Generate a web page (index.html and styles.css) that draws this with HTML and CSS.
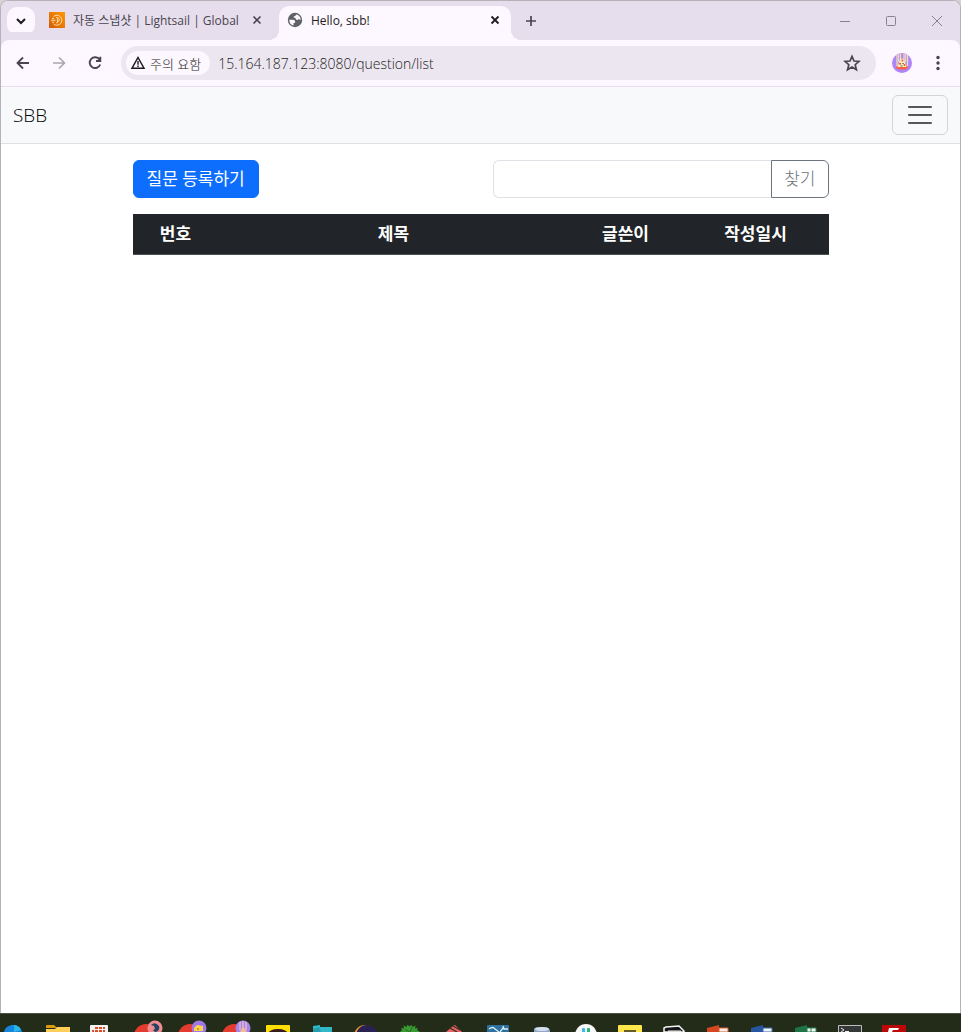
FILE: index.html
```
<!DOCTYPE html>
<html lang="ko">
<head>
  <meta charset="UTF-8">
  <meta name="viewport" content="width=device-width, initial-scale=1.0">
  <title>Hello, sbb!</title>
  <link rel="stylesheet" href="styles.css">
</head>
<body>
  <div class="window">
    <!-- 탭 -->
    <div class="tab-strip">
      <button class="tab-search" aria-label="탭 검색">
        <svg width="28" height="28" viewBox="0 0 28 28"><path d="M10 12l4 4 4-4" fill="none" stroke="#1d1b20" stroke-width="2"/></svg>
      </button>
      <div class="tab">
        <svg width="16" height="16" viewBox="0 0 16 16">
          <defs><linearGradient id="aws" x1="0" y1="1" x2="1" y2="0"><stop offset="0" stop-color="#d45b07"/><stop offset="1" stop-color="#ff9900"/></linearGradient></defs>
          <rect width="16" height="16" fill="url(#aws)"/>
          <g fill="none" stroke="#ffe3bd" stroke-width="0.900"><path d="M4.500 4.500A5 5 0 1 1 4.500 12M2 8.300h4.500M3 6.500h2M3 10.200h2"/><path d="M7 5.500q4 0 3 3-1 2.500-3 2.500M8.500 6.500v3.500"/></g>
        </svg>
        <span class="tab-title">자동 스냅샷 | Lightsail | Global</span>
        <button class="tab-close" aria-label="닫기"><svg width="16" height="16" viewBox="0 0 16 16"><path d="M4.500 4.500l7 7M11.500 4.500l-7 7" stroke="#49454f" stroke-width="1.600"/></svg></button>
      </div>
      <div class="tab active">
        <svg width="16" height="16" viewBox="0 0 16 16">
          <circle cx="8" cy="8" r="7.200" fill="#5f6368"/>
          <path d="M2.300 7.700h3.600c1.700 0 2.400 1.100 2.300 2.200-.1.900-.8 1.100-1.700 1.100v2.600C3.700 12.900 2.100 10.600 2.300 7.700zM9 2.400c0 1.100-.8 1.900-2.200 1.900v1.500h1.500c.5 2.200 1.600 2.600 2.800 1.800.8-.5 1.500-.2 2.600.3.200-2.600-1.600-5.200-4.700-5.500z" fill="#fdf7ff"/>
        </svg>
        <span class="tab-title">Hello, sbb!</span>
        <button class="tab-close" aria-label="닫기"><svg width="16" height="16" viewBox="0 0 16 16"><path d="M4.500 4.500l7 7M11.500 4.500l-7 7" stroke="#1d1b20" stroke-width="1.800"/></svg></button>
      </div>
      <button class="new-tab" aria-label="새 탭"><svg width="16" height="16" viewBox="0 0 16 16"><path d="M8 3v10M3 8h10" stroke="#49454f" stroke-width="1.700"/></svg></button>
      <div class="window-controls">
        <button aria-label="최소화"><svg width="12" height="12" viewBox="0 0 12 12"><path d="M1 6.500h10"/></svg></button>
        <button aria-label="최대화"><svg width="12" height="12" viewBox="0 0 12 12"><rect x="1.500" y="1.500" width="9" height="9" rx="1"/></svg></button>
        <button aria-label="창 닫기"><svg width="12" height="12" viewBox="0 0 12 12"><path d="M1 1l10 10M11 1L1 11"/></svg></button>
      </div>
    </div>

    <!-- 주소창 -->
    <div class="toolbar">
      <div class="nav-buttons">
        <button aria-label="뒤로"><svg width="16" height="16" viewBox="0 0 16 16" fill="none" stroke="#49454f" stroke-width="1.800"><path d="M14 8H3M8 2.500L2.500 8 8 13.500"/></svg></button>
        <button aria-label="앞으로"><svg width="16" height="16" viewBox="0 0 16 16" fill="none" stroke="#aaa5ae" stroke-width="1.600"><path d="M2 8h11M8 2.500L13.500 8 8 13.500"/></svg></button>
        <button aria-label="새로고침"><svg width="16" height="16" viewBox="0 0 16 16" fill="none" stroke="#49454f" stroke-width="1.900"><path d="M12.600 4.600A5.400 5.400 0 1 0 13.200 9.500M13.300 1.800V6H9"/></svg></button>
      </div>
      <div class="omnibox">
        <button class="site-chip">
          <svg width="16" height="16" viewBox="0 0 16 16"><path d="M8 2.500L14 13.200H2z" fill="none" stroke="#1d1b20" stroke-width="1.500"/><path d="M8 6v3.800M8 10.500v1.400" stroke="#1d1b20" stroke-width="1.400"/></svg>
          주의 요함
        </button>
        <input class="url" type="text" aria-label="주소" value="15.164.187.123:8080/question/list">
        <button class="bookmark" aria-label="북마크"><svg width="18" height="18" viewBox="0 0 18 18"><path d="M9 2.300l2 4.700 5 .4-3.800 3.300 1.200 5L9 13l-4.400 2.700 1.200-5L2 7.400 7 7z" fill="none" stroke="#49454f" stroke-width="1.700"/></svg></button>
      </div>
      <button class="profile" aria-label="프로필">
        <svg width="20" height="20" viewBox="0 0 20 20">
          <circle cx="10" cy="10" r="10" fill="#ad84fb"/>
          <path d="M5 1.500V13M8.500 .5V8M12 .5V8M15.500 1.800V13" stroke="#f6df9b" stroke-width="1.300"/>
          <path d="M6.700 1v8M13.700 1v8" stroke="#e9dff1" stroke-width="1"/>
          <ellipse cx="10" cy="14.500" rx="6" ry="2" fill="#ff6240"/>
          <path d="M5.500 14L7 9.500 8 6.500l2-1 2 1 1.200 3L14.500 14z" fill="#fff0bd"/>
          <g fill="#ed4b32"><circle cx="10.400" cy="7.400" r="1"/><circle cx="8" cy="10.800" r="1"/><circle cx="12.500" cy="12" r="1"/></g>
          <path d="M10.300 10.500h1.500M8.500 13h2" stroke="#71564d"/>
        </svg>
      </button>
      <button class="more" aria-label="메뉴"><svg width="16" height="16" viewBox="0 0 16 16" fill="#49454f"><circle cx="8" cy="2.500" r="1.700"/><circle cx="8" cy="8" r="1.700"/><circle cx="8" cy="13.500" r="1.700"/></svg></button>
    </div>

    <!-- 페이지 -->
    <nav class="navbar">
      <a class="navbar-brand" href="#">SBB</a>
      <button class="navbar-toggler" aria-label="Toggle navigation">
        <svg width="30" height="30" viewBox="0 0 30 30"><path d="M4 7h22M4 15h22M4 23h22" stroke="#55575b" stroke-width="2" stroke-linecap="round"/></svg>
      </button>
    </nav>
    <main class="container">
      <div class="row">
        <div class="col"><a class="btn btn-primary" href="#">질문 등록하기</a></div>
        <form class="col input-group">
          <input class="form-control" type="text" aria-label="검색어">
          <button class="btn btn-outline" type="button">찾기</button>
        </form>
      </div>
      <table class="table">
        <colgroup>
          <col class="col-no">
          <col>
          <col class="col-author">
          <col class="col-date">
        </colgroup>
        <thead>
          <tr>
            <th>번호</th>
            <th>제목</th>
            <th>글쓴이</th>
            <th>작성일시</th>
          </tr>
        </thead>
        <tbody></tbody>
      </table>
    </main>
  </div>

  <!-- 작업 표시줄 -->
  <footer class="taskbar">
    <svg viewBox="0 0 28 18"><path d="M4 18c1-5 5-7 9-7 5 0 8 3 9 7z" fill="#1686dc"/><path d="M13 11c4 0 7 2 8 5l-7 2c-1-3 2-4-1-7z" fill="#28b9e9"/></svg>
    <svg viewBox="0 0 28 18"><path d="M2 12q0-1 1-1h7l3 3H2z" fill="#d79a10"/><path d="M2 15h9l2-2h13v5H2z" fill="#ffcf57"/></svg>
    <svg viewBox="0 0 28 18"><rect x="2" y="11" width="18" height="9" rx="1" fill="#f3f3f3"/><path d="M7 13h3v2H7zM11 13h3v2h-3zM15 13h2v2h-2zM4 16h2v2H4zM7 16h3v2H7zM11 16h3v2h-3zM15 16h2v2h-2z" fill="#d94c22"/></svg>
    <svg viewBox="0 0 28 18"><circle cx="14" cy="22" r="12" fill="#e43b2f"/><circle cx="23" cy="14" r="7.500" fill="#ef8d92"/><path d="M19 11q4-4 8 1c1 3-1 6-4 6l-2-2 2-1-1-3z" fill="#244462"/></svg>
    <svg viewBox="0 0 28 18"><circle cx="14" cy="22" r="12" fill="#e43b2f"/><circle cx="23" cy="14" r="7.500" fill="#a078e3"/><path d="M18 14l3-3 6 1v5h-9z" fill="#ffd44a"/><circle cx="22" cy="15" r="1" fill="#b78620"/></svg>
    <svg viewBox="0 0 28 18"><circle cx="14" cy="22" r="12" fill="#e43b2f"/><circle cx="23" cy="14" r="7.500" fill="#a982ed"/><path d="M20 8v8M23 7v8M26 8v8" stroke="#f1d9b1"/><path d="M20 18l3-6 4 6z" fill="#f3b99c"/></svg>
    <svg viewBox="0 0 28 18"><rect x="2" y="11" width="24" height="10" rx="1" fill="#ffe000"/><ellipse cx="14" cy="20" rx="10" ry="5" fill="#351c1b"/></svg>
    <svg viewBox="0 0 28 18"><path d="M5 12l7-1v2h12v5H5z" fill="#2fb9c9"/><path d="M5 15l6-2 2 5H5z" fill="#269eaf"/></svg>
    <svg viewBox="0 0 28 18"><circle cx="13" cy="22" r="11" fill="#ed9330"/><circle cx="15" cy="22" r="11" fill="#292151"/></svg>
    <svg viewBox="0 0 28 18"><path d="M4 18l2-2-1-2 3 .5-.5-3 3 1.500 1-2.200 2 1.700 2-1.700 1 2.200 3-1.500-.5 3 3-.5-1 2 3 2z" fill="#399c32"/><path d="M9 15l4 3M16 13l-2 5" stroke="#226e20"/></svg>
    <svg viewBox="0 0 28 18"><path d="M6 18l7-6 2-1 7 7z" fill="#e96366"/><path d="M10 14l7 4M13 12l7 4" stroke="#392c24" stroke-width="1.200"/></svg>
    <svg viewBox="0 0 28 18"><rect x="3" y="11" width="22" height="9" rx="1" fill="#2e719e"/><path d="M5 15q4-3 6 0l4 3M19 12l1 3h4M19 14l-3 4" fill="none" stroke="#d6eef8" stroke-width="1.300"/></svg>
    <svg viewBox="0 0 28 18"><path d="M6 15q0-2 8-2 8 0 8 4v1H6z" fill="#91a8c7"/><ellipse cx="14" cy="15" rx="7" ry="2" fill="#d3deec"/></svg>
    <svg viewBox="0 0 28 18"><circle cx="14" cy="21" r="11" fill="#f8f8f8"/><rect x="10" y="14" width="3" height="6" rx="1" fill="#38bded"/><rect x="15" y="14" width="3" height="6" rx="1" fill="#2cb47c"/></svg>
    <svg viewBox="0 0 28 18"><rect x="2" y="11" width="24" height="9" rx="1" fill="#ffe74b"/><path d="M8 17h12" stroke="#665d24" stroke-width="2"/></svg>
    <svg viewBox="0 0 28 18"><path d="M4 18v-4l2-1 13-1 5 5v1z" fill="#151515" stroke="#f4f4f4" stroke-width="1.500"/><path d="M8 17h13" stroke="#fff"/></svg>
    <svg viewBox="0 0 28 18"><path d="M3 14l12-3v7H3z" fill="#d64620"/><path d="M15 14h9v4h-9z" fill="#f5eee9" stroke="#dc5a35"/></svg>
    <svg viewBox="0 0 28 18"><path d="M3 14l12-3v7H3z" fill="#2855a0"/><path d="M15 14h9v4h-9z" fill="#eef2f7" stroke="#3c6bb2"/></svg>
    <svg viewBox="0 0 28 18"><path d="M3 14l12-3v7H3z" fill="#1d7445"/><path d="M15 14h9v4h-9z" fill="#edf5f0" stroke="#2c8252"/><path d="M19 14v4" stroke="#2c8252"/></svg>
    <svg viewBox="0 0 28 18"><path d="M2.500 19v-7.500h23V19" fill="#363838" stroke="#bcbdbd"/><path d="M5 14l3 2-3 2M9 17.500h4" fill="none" stroke="#eee"/></svg>
    <svg viewBox="0 0 28 18"><rect x="2" y="11" width="24" height="9" fill="#be0707"/><path d="M9 14h10l-1 2h-5l-1 2H8z" fill="#fff"/></svg>
  </footer>
</body>
</html>
```

FILE: styles.css
```
* {
  box-sizing: border-box;
}

body {
  margin: 0;
  min-height: 100vh;
  display: flex;
  flex-direction: column;
  background: #d5d3d6;
  color: #212529;
  font-family: "Open Sans", "Noto Sans CJK KR", sans-serif;
  font-size: 16px;
  line-height: 24px;
}

button,
input {
  font-family: inherit;
  margin: 0;
}

button {
  border: 0;
  padding: 0;
  background: none;
  cursor: pointer;
}

svg {
  display: block;
  flex-shrink: 0;
}

.window {
  flex: 1;
  display: flex;
  flex-direction: column;
  background: #fff;
  border: 1px solid #b5b3b7;
  border-bottom: 0;
  border-radius: 8px 8px 0 0;
  overflow: hidden;
}

/* 탭 */
.tab-strip {
  display: flex;
  align-items: flex-end;
  gap: 6px;
  height: 39px;
  padding-left: 6px;
  background: #e6deec;
}

.tab-search {
  align-self: center;
  width: 28px;
  height: 28px;
  border-radius: 10px;
  background: #fdf7ff;
}

.tab {
  position: relative;
  display: flex;
  align-items: center;
  gap: 8px;
  width: 232px;
  height: 34px;
  padding: 0 8px 6px;
  font-size: 12px;
  color: #49454f;
}

.tab.active {
  background: #fdf7ff;
  border-radius: 10px 10px 0 0;
  color: #1d1b20;
}

.tab.active::before,
.tab.active::after {
  content: "";
  position: absolute;
  bottom: 0;
  width: 10px;
  height: 10px;
}

.tab.active::before {
  right: 100%;
  background: radial-gradient(circle at 0 0, transparent 10px, #fdf7ff 10px);
}

.tab.active::after {
  left: 100%;
  background: radial-gradient(circle at 100% 0, transparent 10px, #fdf7ff 10px);
}

.tab-title {
  flex: 1;
  padding-top: 2px;
  overflow: hidden;
  white-space: nowrap;
}

.new-tab {
  align-self: center;
  padding: 0 6px;
}

.window-controls {
  align-self: stretch;
  display: flex;
  margin-left: auto;
}

.window-controls button {
  display: flex;
  align-items: center;
  justify-content: center;
  width: 46px;
}

.window-controls svg {
  fill: none;
  stroke: #88828e;
}

/* 주소창 */
.toolbar {
  display: flex;
  align-items: center;
  height: 47px;
  padding: 0 14px;
  background: #fdf7ff;
  border-bottom: 1px solid #e6deec;
  border-radius: 8px 8px 0 0;
  box-shadow: 0 -8px 0 #e6deec;
}

.nav-buttons {
  display: flex;
  gap: 20px;
  margin-right: 18px;
}

.omnibox {
  flex: 1;
  display: flex;
  align-items: center;
  gap: 8px;
  height: 34px;
  padding: 0 15px 0 5px;
  border-radius: 17px;
  background: #ece6f0;
}

.site-chip {
  display: flex;
  align-items: center;
  gap: 4px;
  height: 24px;
  padding: 0 9px 0 4px;
  border-radius: 12px;
  background: #fdf7ff;
  color: #1d1b20;
  font-size: 13px;
  font-weight: 300;
}

.url {
  flex: 1;
  min-width: 0;
  border: 0;
  padding: 0;
  outline: none;
  background: none;
  color: #1d1b20;
  font-size: 14px;
  font-weight: 300;
}

.profile {
  margin: 0 18px 0 16px;
}

/* 상단 메뉴 */
.navbar {
  display: flex;
  align-items: center;
  justify-content: space-between;
  padding: 8px 12px;
  background: #f8f9fa;
  border-bottom: 1px solid #dee2e6;
}

.navbar-brand {
  color: #000;
  font-size: 19px;
  font-weight: 300;
  text-decoration: none;
}

.navbar-toggler {
  padding: 4px 12px;
  border: 1px solid #d3d4d5;
  border-radius: 6px;
}

/* 본문 */
.container {
  width: 100%;
  max-width: 720px;
  margin: 16px auto;
  padding: 0 12px;
}

.row {
  display: flex;
  gap: 24px;
  margin-bottom: 16px;
}

.col {
  flex: 1;
  min-width: 0;
}

.btn {
  display: inline-block;
  padding: 6px 12px;
  border: 1px solid transparent;
  border-radius: 6px;
  font-size: 17px;
  line-height: 24px;
  text-decoration: none;
  white-space: nowrap;
}

.btn-primary {
  padding: 6px 13px;
  background: #0d6efd;
  border-color: #0d6efd;
  color: #fff;
}

.btn-outline {
  border: 1px solid #6c757d;
  border-radius: 0 6px 6px 0;
  color: #6c757d;
  font-weight: 300;
}

.input-group {
  display: flex;
}

.form-control {
  flex: 1;
  min-width: 0;
  height: 38px;
  padding: 6px 12px;
  border: 1px solid #dee2e6;
  border-right: 0;
  border-radius: 6px 0 0 6px;
  font-size: 16px;
}

.table {
  width: 100%;
  table-layout: fixed;
  border-collapse: collapse;
}

.col-no {
  width: 86px;
}

.col-author {
  width: 114px;
}

.col-date {
  width: 146px;
}

.table th {
  padding: 8px;
  background: #212529;
  border-bottom: 1px solid #4d5154;
  color: #fff;
  text-align: center;
  font-size: 17px;
  font-weight: 700;
}

/* 작업 표시줄 */
.taskbar {
  display: flex;
  gap: 16px;
  height: 19px;
  background: #222c19;
  border-top: 1px solid #4b5245;
  overflow: hidden;
}

.taskbar svg {
  width: 28px;
  height: 18px;
  overflow: visible;
}
```
